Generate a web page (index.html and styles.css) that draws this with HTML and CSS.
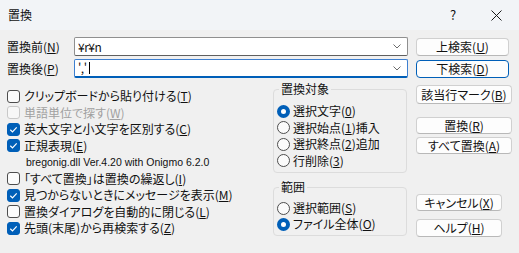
FILE: index.html
```html
<!DOCTYPE html>
<html lang="ja">
<head>
    <meta charset="UTF-8">
    <title>置換</title>
    <link rel="stylesheet" href="styles.css">
</head>
<body>
    <div class="window">
        <div class="titlebar">
            <span class="title">置換</span>
            <span class="title-help">?</span>
            <span class="title-close">
                <svg width="11" height="11" viewBox="0 0 11 11"><path d="M0.5 0.5 L10.5 10.5 M10.5 0.5 L0.5 10.5" stroke="#1a1a1a" stroke-width="1" fill="none"/></svg>
            </span>
        </div>

        <div class="dialog">
            <div class="field-row">
                <label class="field-label">置換前(<u>N</u>)</label>
                <div class="combo">
                    <span class="combo-text">¥r¥n</span>
                    <svg class="chevron" width="8" height="5" viewBox="0 0 8 5"><polyline points="0.5,0.5 4,4 7.5,0.5" stroke="#6b6b6b" stroke-width="1" fill="none"/></svg>
                </div>
                <button class="btn btn-search">上検索(<u>U</u>)</button>
            </div>
            <div class="field-row">
                <label class="field-label">置換後(<u>P</u>)</label>
                <div class="combo combo-focus">
                    <span class="combo-text">','<span class="caret"></span></span>
                    <svg class="chevron" width="8" height="5" viewBox="0 0 8 5"><polyline points="0.5,0.5 4,4 7.5,0.5" stroke="#6b6b6b" stroke-width="1" fill="none"/></svg>
                </div>
                <button class="btn btn-search btn-default">下検索(<u>D</u>)</button>
            </div>

            <div class="lower">
                <!-- options -->
                <div class="options">
                    <div class="check-row"><span class="check"></span>クリップボードから貼り付ける(<u>T</u>)</div>
                    <div class="check-row disabled"><span class="check"></span>単語単位で探す(<u>W</u>)</div>
                    <div class="check-row"><span class="check checked"><svg width="11" height="11" viewBox="0 0 11 11"><path d="M2.3 5.8 L4.5 7.9 L8.7 3.3" stroke="#fff" stroke-width="1.2" fill="none"/></svg></span>英大文字と小文字を区別する(<u>C</u>)</div>
                    <div class="check-row"><span class="check checked"><svg width="11" height="11" viewBox="0 0 11 11"><path d="M2.3 5.8 L4.5 7.9 L8.7 3.3" stroke="#fff" stroke-width="1.2" fill="none"/></svg></span>正規表現(<u>E</u>)</div>
                    <div class="check-row version">bregonig.dll Ver.4.20 with Onigmo 6.2.0</div>
                    <div class="check-row"><span class="check"></span>「すべて置換」は置換の繰返し(<u>I</u>)</div>
                    <div class="check-row"><span class="check checked"><svg width="11" height="11" viewBox="0 0 11 11"><path d="M2.3 5.8 L4.5 7.9 L8.7 3.3" stroke="#fff" stroke-width="1.2" fill="none"/></svg></span>見つからないときにメッセージを表示(<u>M</u>)</div>
                    <div class="check-row"><span class="check"></span>置換ダイアログを自動的に閉じる(<u>L</u>)</div>
                    <div class="check-row"><span class="check checked"><svg width="11" height="11" viewBox="0 0 11 11"><path d="M2.3 5.8 L4.5 7.9 L8.7 3.3" stroke="#fff" stroke-width="1.2" fill="none"/></svg></span>先頭(末尾)から再検索する(<u>Z</u>)</div>
                </div>

                <!-- target / range groups -->
                <div class="groups">
                    <fieldset class="group group-target">
                        <legend>置換対象</legend>
                        <div class="radio-row"><span class="radio selected"></span>選択文字(<u>0</u>)</div>
                        <div class="radio-row"><span class="radio"></span>選択始点(<u>1</u>)挿入</div>
                        <div class="radio-row"><span class="radio"></span>選択終点(<u>2</u>)追加</div>
                        <div class="radio-row"><span class="radio"></span>行削除(<u>3</u>)</div>
                    </fieldset>
                    <fieldset class="group group-range">
                        <legend>範囲</legend>
                        <div class="radio-row"><span class="radio"></span>選択範囲(<u>S</u>)</div>
                        <div class="radio-row"><span class="radio selected"></span>ファイル全体(<u>O</u>)</div>
                    </fieldset>
                </div>

                <!-- buttons -->
                <div class="actions">
                    <button class="btn btn-mark">該当行マーク(<u>B</u>)</button>
                    <button class="btn btn-replace">置換(<u>R</u>)</button>
                    <button class="btn btn-all">すべて置換(<u>A</u>)</button>
                    <button class="btn btn-cancel">キャンセル(<u>X</u>)</button>
                    <button class="btn btn-help">ヘルプ(<u>H</u>)</button>
                </div>
            </div>
        </div>
    </div>
</body>
</html>
```

FILE: styles.css
```css
* {
    box-sizing: border-box;
}

body {
    margin: 0;
    font-family: "Noto Sans CJK JP", sans-serif;
    font-size: 12px;
    line-height: 14px;
    color: #111;
    font-feature-settings: "palt";
}

u {
    text-underline-offset: 1px;
}

/* Window frame */
.window {
    width: 519px;
    height: 253px;
    background-color: #f0f0f0;
    overflow: hidden;
}

.titlebar {
    height: 30px;
    display: flex;
    align-items: center;
    padding-left: 8px;
    background-color: #f2f4f7;
}

.title {
    flex: 1;
}

.title-help {
    width: 40px;
    text-align: center;
    font-size: 13px;
}

.title-close {
    width: 46px;
    display: flex;
    justify-content: center;
}

/* Dialog body */
.dialog {
    padding: 7px 0 0 7px;
}

.field-row {
    display: flex;
    align-items: center;
    height: 19px;
    margin-bottom: 3px;
}

.field-label {
    width: 67px;
}

.combo {
    width: 334px;
    height: 19px;
    display: flex;
    align-items: center;
    padding: 0 6px 0 3px;
    background-color: #fff;
    border: 1px solid #8f8f8f;
    border-bottom-color: #5f5f5f;
    border-radius: 2px;
}

.combo-focus {
    border-color: #3d7fd0;
    border-bottom: 2px solid #005fb8;
}

.combo-text {
    flex: 1;
    display: flex;
    align-items: center;
    letter-spacing: -0.5px;
}

.caret {
    width: 1px;
    height: 12px;
    margin-left: 2px;
    background-color: #000;
}

/* Buttons */
.btn {
    display: flex;
    align-items: center;
    justify-content: center;
    padding: 0;
    font: inherit;
    color: #111;
    background-color: #fdfdfd;
    border: 1px solid #d0d0d0;
    border-bottom-color: #b8b8b8;
    border-radius: 4px;
}

.btn-search {
    width: 93px;
    height: 18px;
    margin-left: 8px;
}

.btn-default {
    border-color: #005fb8;
}

/* Lower area */
.lower {
    display: flex;
    margin-top: 4px;
}

.options {
    width: 266px;
    padding-top: 5.75px;
}

.check-row {
    height: 16.5px;
    display: flex;
    align-items: center;
    white-space: nowrap;
}

.check-row.disabled {
    color: #a0a0a0;
}

.check-row.version {
    padding-left: 19px;
    font-family: "Liberation Sans", sans-serif;
    font-size: 10.5px;
}

.check {
    width: 13px;
    height: 13px;
    margin-right: 4px;
    flex-shrink: 0;
    display: flex;
    background-color: #fbfbfb;
    border: 1px solid #4d4d4d;
    border-radius: 3px;
}

.disabled .check {
    border-color: #c8c8c8;
    background-color: #f7f7f7;
}

.check.checked {
    border-color: #005fb8;
    background-color: #005fb8;
}

.groups {
    width: 134px;
}

.group {
    margin: 0;
    min-width: 0;
    border: 1px solid #dcdcdc;
    border-radius: 4px;
    padding: 6.75px 0 3.5px 3px;
}

.group legend {
    padding: 0 2px;
    margin-left: 2px;
    line-height: 14px;
}

.group-range {
    margin-top: 7px;
    padding-top: 6px;
    padding-bottom: 3px;
}

.radio-row {
    height: 16.5px;
    display: flex;
    align-items: center;
    white-space: nowrap;
}

.group-range .radio-row {
    height: 16px;
}

.radio {
    width: 13px;
    height: 13px;
    margin-right: 3px;
    flex-shrink: 0;
    background-color: #fbfbfb;
    border: 1px solid #4d4d4d;
    border-radius: 50%;
}

.radio.selected {
    border: 4px solid #005fb8;
    background-color: #fff;
}

.actions {
    display: flex;
    flex-direction: column;
    align-items: flex-start;
    padding-top: 3px;
    margin-left: 9px;
}

.btn-mark {
    width: 96px;
    height: 19px;
}

.btn-replace {
    width: 96px;
    height: 17px;
    margin-top: 13px;
}

.btn-all {
    width: 96px;
    height: 17px;
    margin-top: 3px;
}

.btn-cancel {
    width: 86px;
    height: 17px;
    margin-top: 40px;
}

.btn-help {
    width: 86px;
    height: 18px;
    margin-top: 8px;
}
```
